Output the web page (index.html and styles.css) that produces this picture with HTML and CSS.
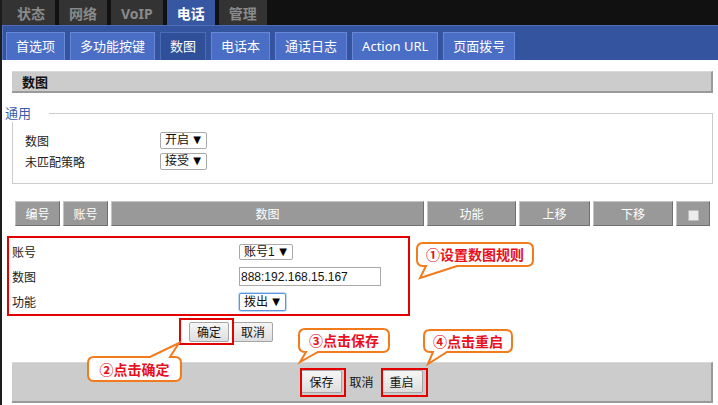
FILE: index.html
```html
<!DOCTYPE html>
<html lang="zh-CN">
<head>
    <meta charset="UTF-8">
    <title>数图</title>
    <link rel="stylesheet" href="styles.css">
</head>
<body>
<div class="page">
    <div class="topnav">
        <a class="tab first">状态</a>
        <a class="tab">网络</a>
        <a class="tab">VoIP</a>
        <a class="tab on">电话</a>
        <a class="tab">管理</a>
    </div>
    <div class="subnav">
        <a class="subtab">首选项</a>
        <a class="subtab">多功能按键</a>
        <a class="subtab on">数图</a>
        <a class="subtab">电话本</a>
        <a class="subtab">通话日志</a>
        <a class="subtab">Action URL</a>
        <a class="subtab">页面拨号</a>
    </div>

    <div class="content">
        <div class="section-title">数图</div>

        <fieldset class="group">
            <legend>通用</legend>
            <div class="row">
                <label>数图</label>
                <span class="select w47">开启</span>
            </div>
            <div class="row">
                <label>未匹配策略</label>
                <span class="select w47">接受</span>
            </div>
        </fieldset>

        <table class="list">
            <tr>
                <th class="c-no">编号</th>
                <th class="c-acc">账号</th>
                <th>数图</th>
                <th class="c-fn">功能</th>
                <th class="c-up">上移</th>
                <th class="c-down">下移</th>
                <th class="c-chk"><span class="check"></span></th>
            </tr>
        </table>

        <div class="edit">
            <div class="erow">
                <label>账号</label>
                <span class="select w54">账号1</span>
            </div>
            <div class="erow">
                <label>数图</label>
                <input class="text" type="text" value="888:192.168.15.167">
            </div>
            <div class="erow">
                <label>功能</label>
                <span class="select w47 focus">拨出</span>
            </div>
        </div>

        <div class="actions">
            <button class="btn">确定</button>
            <button class="btn">取消</button>
        </div>

        <div class="footer">
            <button class="btn big">保存</button>
            <button class="btn plain">取消</button>
            <button class="btn big">重启</button>
        </div>
    </div>
</div>

<!-- annotations drawn over the page -->
<div class="mark m-ok"></div>
<div class="mark m-save"></div>
<div class="mark m-reboot"></div>

<div class="callout c1">
    <svg width="118" height="25"><path d="M7,1 H111 Q117,1 117,7 V18 Q117,24 111,24 H41 L4,36 L10,24 H7 Q1,24 1,18 V7 Q1,1 7,1 Z"/></svg>
    <span>①设置数图规则</span>
</div>
<div class="callout c2">
    <svg width="95" height="26"><path d="M7,1 H63 L92,-13 L83,1 H88 Q94,1 94,7 V19 Q94,25 88,25 H7 Q1,25 1,19 V7 Q1,1 7,1 Z"/></svg>
    <span>②点击确定</span>
</div>
<div class="callout c3">
    <svg width="92" height="25"><path d="M7,1 H85 Q91,1 91,7 V18 Q91,24 85,24 H20 L2,34 L8,24 H7 Q1,24 1,18 V7 Q1,1 7,1 Z"/></svg>
    <span>③点击保存</span>
</div>
<div class="callout c4">
    <svg width="90" height="24"><path d="M7,1 H83 Q89,1 89,7 V17 Q89,23 83,23 H24 L5,35 L10,23 H7 Q1,23 1,17 V7 Q1,1 7,1 Z"/></svg>
    <span>④点击重启</span>
</div>
</body>
</html>
```

FILE: styles.css
```css
body {
  margin: 0;
  background: #fff;
  font-family: "Liberation Sans", "Noto Sans CJK SC", sans-serif;
  font-size: 12px;
  color: #222;
  position: relative;
}
.page {
  border-left: 2px solid #1c1c1c;
  min-height: 405px;
}

/* top tabs */
.topnav {
  background: #111;
  height: 25px;
  display: flex;
  gap: 4px;
}
.tab {
  padding: 3px 10px 0;
  line-height: 22px;
  font-family: "Noto Sans", "Noto Sans CJK SC", sans-serif;
  font-size: 14px;
  font-weight: bold;
  color: #8a8a8a;
  background: #333;
}
.tab.first {
  padding-left: 15px;
}
.tab.on {
  background: #3857a3;
  color: #fff;
}

/* second row tabs */
.subnav {
  background: #3454a0;
  border-top: 1px solid #4d6db8;
  border-left: 1px solid #5473bd;
  height: 35px;
  box-sizing: border-box;
  display: flex;
  gap: 5px;
  padding: 6px 0 0 3px;
}
.subtab {
  height: 28px;
  box-sizing: border-box;
  border: 1px solid #6887d4;
  border-bottom: none;
  background: #4a6dc5;
  color: #fff;
  font-family: "Noto Sans", "Noto Sans CJK SC", sans-serif;
  font-size: 13px;
  line-height: 26px;
  padding: 0 9px;
}
.subtab.on {
  background: #2f4f99;
  border-color: #4b6bb8;
}

.content {
  padding: 0 5px 0 10px;
}
.section-title {
  margin-top: 11px;
  height: 22px;
  box-sizing: border-box;
  background: #ccc;
  border-top: 1px solid #d9d9d9;
  border-bottom: 2px solid #9a9a9a;
  border-right: 2px solid #9a9a9a;
  padding-left: 10px;
  font-family: "Noto Sans CJK SC", sans-serif;
  font-weight: bold;
  font-size: 13px;
  line-height: 19px;
  color: #111;
}

/* general group */
.group {
  margin: 11px 0 0;
  padding: 8px 0 11px 12px;
  border: 1px solid #ccc;
}
.group legend {
  margin-left: -22px;
  padding: 0 18px 0 2px;
  background: #fff;
  color: #3a5ca8;
  font-family: "Noto Sans CJK SC", sans-serif;
  font-size: 13px;
  line-height: 18px;
}
.row {
  display: flex;
  align-items: center;
  height: 21px;
}
.row label {
  width: 135px;
}
label {
  font-family: "Noto Sans CJK SC", sans-serif;
  font-size: 12px;
  color: #222;
}

/* fake drop-down */
.select {
  position: relative;
  display: inline-block;
  height: 17px;
  box-sizing: border-box;
  border: 1px solid #a9a9a9;
  border-radius: 2px;
  background: #fff;
  padding-left: 4px;
  font-family: "Liberation Sans", "Noto Sans CJK SC", sans-serif;
  font-size: 12px;
  line-height: 15px;
  color: #111;
}
.select::after {
  content: "▼";
  position: absolute;
  right: 5px;
  top: 0;
  font-family: "DejaVu Sans", sans-serif;
  font-size: 10px;
  line-height: 14px;
  color: #000;
}
.w47 {
  width: 47px;
}
.w54 {
  width: 54px;
  height: 16px;
  line-height: 14px;
}
.select.focus {
  height: 18px;
  line-height: 16px;
  border-color: #5a96da;
  box-shadow: 0 0 0 1px #c3d8f2;
}
.select.focus::after {
  line-height: 16px;
}

/* list header */
.list {
  width: 100%;
  margin-top: 14px;
  border-collapse: separate;
  border-spacing: 3px;
}
.list th {
  background: #999;
  color: #fff;
  font-family: "Noto Sans CJK SC", sans-serif;
  font-weight: normal;
  font-size: 12px;
  line-height: 23px;
  padding: 0;
  border: 1px solid;
  border-color: #c4c4c4 #707070 #707070 #c4c4c4;
}
.c-no, .c-acc { width: 43px; }
.c-fn { width: 87px; }
.c-up { width: 69px; }
.c-down { width: 78px; }
.c-chk { width: 32px; }
.check {
  display: inline-block;
  width: 9px;
  height: 9px;
  background: #ececec;
  border: 1px solid #bdbdbd;
  border-radius: 1px;
  vertical-align: middle;
}

/* edit rows */
.edit {
  margin: 7px 0 0 -5px;
  width: 403px;
  box-sizing: border-box;
  border: 2px solid #e50000;
  padding: 1px 0 0 3px;
}
.erow {
  display: flex;
  align-items: center;
  height: 25px;
}
.erow label {
  width: 227px;
}
.text {
  width: 142px;
  height: 19px;
  box-sizing: border-box;
  border: 1px solid #a9a9a9;
  padding: 0 1px;
  font-family: "Liberation Sans", sans-serif;
  font-size: 12px;
  color: #111;
}

/* buttons */
.btn {
  height: 20px;
  padding: 0 7px;
  border: 1px solid #a6a6a6;
  border-radius: 2px;
  background: linear-gradient(#f6f6f6, #dedede);
  font-family: "Noto Sans CJK SC", sans-serif;
  font-size: 12px;
  line-height: 18px;
  color: #111;
}
.actions {
  margin: 6px 0 0 177px;
  display: flex;
  gap: 4px;
}
.footer {
  margin-top: 20px;
  background: #ccc;
  border-top: 1px solid #d9d9d9;
  border-right: 2px solid #999;
  border-bottom: 2px solid #999;
  padding: 7px 0 8px;
  display: flex;
  justify-content: center;
  gap: 5px;
}
.btn.big {
  height: 23px;
  padding: 0 8px;
}
.btn.plain {
  height: 23px;
  background: none;
  border-color: transparent;
  padding: 0 1px;
}

/* annotations */
.mark {
  position: absolute;
  border: 2px solid #e50000;
  box-sizing: border-box;
}
.m-ok { left: 179px; top: 318px; width: 55px; height: 27px; }
.m-save { left: 300px; top: 368px; width: 46px; height: 29px; }
.m-reboot { left: 381px; top: 368px; width: 47px; height: 29px; }

.callout {
  position: absolute;
}
.callout svg {
  position: absolute;
  left: 0;
  top: 0;
  overflow: visible;
}
.callout path {
  fill: #fff;
  stroke: #f27b1c;
  stroke-width: 2;
}
.callout span {
  position: relative;
  display: block;
  text-align: center;
  font-family: "Noto Sans CJK SC", sans-serif;
  font-weight: bold;
  font-size: 14px;
  color: #e8101c;
}
.c1 { left: 416px; top: 242px; width: 118px; }
.c1 span { line-height: 25px; }
.c2 { left: 87px; top: 356px; width: 95px; }
.c2 span { line-height: 26px; }
.c3 { left: 298px; top: 328px; width: 92px; }
.c3 span { line-height: 25px; }
.c4 { left: 423px; top: 329px; width: 90px; }
.c4 span { line-height: 24px; }
```
